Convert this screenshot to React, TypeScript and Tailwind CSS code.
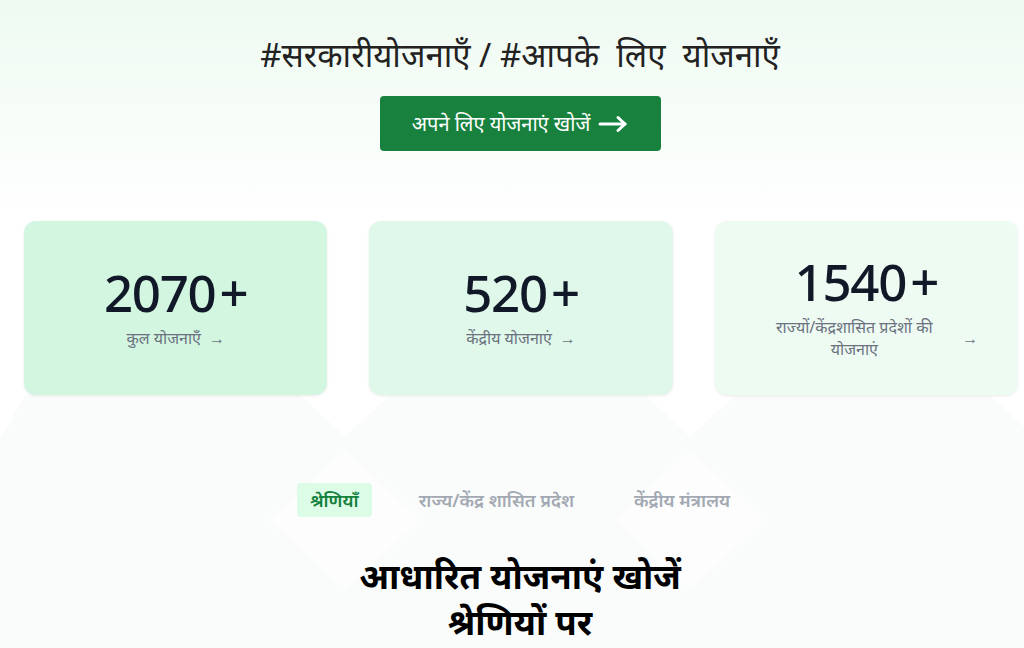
import type { ReactNode } from 'react';

interface StatCard {
    value: string;
    label: ReactNode;
    labelWidth?: string;
    bg: string;
}

const stats: StatCard[] = [
    { value: '2070', label: 'कुल योजनाएँ', bg: 'bg-[#d2f6df]' },
    { value: '520', label: 'केंद्रीय योजनाएं', bg: 'bg-[#e0f8ea]' },
    {
        value: '1540',
        label: (
            <>
                राज्यों/केंद्रशासित प्रदेशों की
                <br />
                योजनाएं
            </>
        ),
        labelWidth: 'w-[200px]',
        bg: 'bg-[#eefbf3]',
    },
];

const tabs = ['श्रेणियाँ', 'राज्य/केंद्र शासित प्रदेश', 'केंद्रीय मंत्रालय'];

function LongArrow() {
    return (
        <svg width="30" height="18" viewBox="0 0 30 18" fill="none" stroke="currentColor" strokeWidth="3" strokeLinecap="round" strokeLinejoin="round">
            <path d="M2 9h25" />
            <path d="M20 2.5 27 9l-7 6.5" />
        </svg>
    );
}

export default function App() {
    return (
        <div className="relative min-h-screen overflow-hidden bg-white font-['Noto_Sans',sans-serif]">
            {/* faint diamond backdrop */}
            <svg
                className="pointer-events-none absolute top-[395px] left-0 h-[500px] w-full"
                viewBox="0 0 1024 500"
                preserveAspectRatio="none"
            >
                <rect width="1024" height="500" fill="#f9fcfa" />
                <polygon points="0,0 25,0 0,45" fill="#ffffff" />
                <polygon points="300,0 390,0 345,42" fill="#ffffff" />
                <polygon points="645,0 735,0 690,42" fill="#ffffff" />
                <polygon points="990,0 1024,0 1024,32" fill="#ffffff" />
                <polygon points="270,125 345,55 420,125 345,195" fill="#ffffff" opacity="0.45" />
                <polygon points="615,125 690,55 765,125 690,195" fill="#ffffff" opacity="0.45" />
            </svg>

            <div className="relative">
                <section className="flex flex-col items-center bg-gradient-to-b from-[#eefaf1] to-white pt-[30px] pb-[70px] pl-4">
                    <h1 className="text-[33px] leading-[50px] font-normal text-[#222]">
                        #सरकारीयोजनाएँ / #आपके&nbsp; लिए&nbsp; योजनाएँ
                    </h1>
                    <button className="mt-4 flex h-[55px] w-[281px] items-center justify-center gap-2 rounded-[4px] bg-[#17813d] text-[20px] text-white">
                        अपने लिए योजनाएं खोजें
                        <LongArrow />
                    </button>
                </section>

                <div className="mr-[6px] ml-6 grid grid-cols-3 gap-[42px]">
                    {stats.map((s) => (
                        <div
                            key={s.value}
                            className={`flex h-[174px] flex-col items-center justify-center rounded-xl px-8 shadow-[0_1px_3px_rgba(0,0,0,0.08)] ${s.bg}`}
                        >
                            <p className="text-[51px] leading-[50px] font-medium tracking-tight text-[#111827]">
                                {s.value}
                                <span className="ml-1">+</span>
                            </p>
                            <div className="mt-[10px] flex w-full items-center justify-center gap-2 text-[16px] leading-[22px] text-[#6b7280]">
                                <span className={`text-center ${s.labelWidth ?? ''}`}>{s.label}</span>
                                <span>→</span>
                            </div>
                        </div>
                    ))}
                </div>

                <div className="mt-[88px] flex items-center justify-center gap-[34px] pl-4">
                    {tabs.map((t, i) => (
                        <button
                            key={t}
                            className={
                                i === 0
                                    ? 'rounded-[4px] bg-[#dcfce7] px-[13px] py-[4px] text-[18px] leading-[26px] font-semibold text-[#15803d]'
                                    : 'px-[13px] py-[4px] text-[18px] leading-[26px] font-semibold text-[#a3a9b3]'
                            }
                        >
                            {t}
                        </button>
                    ))}
                </div>

                <h2 className="mt-[36px] pl-4 text-center text-[35px] leading-[46px] font-bold text-black">
                    आधारित योजनाएं खोजें
                    <br />
                    श्रेणियों पर
                </h2>
            </div>
        </div>
    );
}
